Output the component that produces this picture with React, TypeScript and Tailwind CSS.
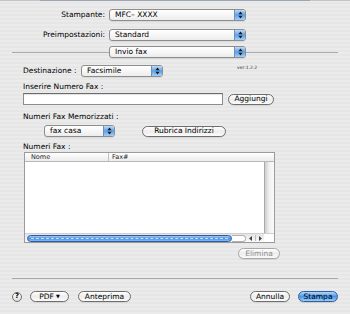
import React from "react";

function Arrows() {
  return (
    <svg width="5" height="8" viewBox="0 0 5 8" aria-hidden="true">
      <path d="M2.5 0.6L4.6 3.2H0.4Z M2.5 7.4L0.4 4.8H4.6Z" fill="#1a1a1a" />
    </svg>
  );
}

function Popup({ label, className = "" }: { label: string; className?: string }) {
  return (
    <div
      className={`flex h-[12px] items-stretch rounded-[3px] border border-[#8d8d8d] bg-gradient-to-b from-white via-[#f7f7f7] to-[#ececec] shadow-[0_1px_0_rgba(0,0,0,0.07)] ${className}`}
    >
      <span className="flex-1 truncate pl-[5px] leading-[10px] text-black">{label}</span>
      <span className="flex w-[11px] items-center justify-center rounded-r-[2px] border-l border-[#6d8fbf] bg-gradient-to-b from-[#bcdaf8] via-[#5f9fe6] to-[#9fd0fa]">
        <Arrows />
      </span>
    </div>
  );
}

function AquaButton({
  children,
  className = "",
  disabled = false,
}: {
  children: React.ReactNode;
  className?: string;
  disabled?: boolean;
}) {
  return (
    <div
      className={`flex h-[11px] items-center justify-center rounded-full border bg-gradient-to-b from-white via-[#ededed] to-[#fbfbfb] leading-none shadow-[0_1px_0_rgba(0,0,0,0.08)] ${
        disabled ? "border-[#a8a8a8] text-[#8e8e8e]" : "border-[#6e6e6e] text-black"
      } ${className}`}
    >
      {children}
    </div>
  );
}

export default function App() {
  return (
    <div className="h-[314px] w-[350px] overflow-hidden bg-[repeating-linear-gradient(0deg,#ebebeb_0px,#ebebeb_2px,#e6e6e6_2px,#e6e6e6_4px)] font-['DejaVu_Sans',sans-serif] text-[7.5px] text-black">
      {/* top edge */}
      <div className="flex h-px">
        <div className="w-[40px] bg-[#c4c4c4]" />
        <div className="w-[270px] bg-[#9aa5b6]" />
        <div className="flex-1 bg-[#c4c4c4]" />
      </div>

      {/* printer / presets */}
      <div className="mt-[8px] flex h-[12px] items-center">
        <span className="w-[105px] text-right">Stampante:</span>
        <Popup label="MFC– XXXX" className="ml-[4px] w-[137px]" />
      </div>
      <div className="mt-[8px] flex h-[12px] items-center">
        <span className="w-[105px] text-right">Preimpostazioni:</span>
        <Popup label="Standard" className="ml-[4px] w-[137px]" />
      </div>
      <div className="mt-[5px] flex h-[12px] items-center">
        <div className="ml-[12px] h-px w-[97px] bg-[#a9a9a9]" />
        <Popup label="Invio fax" className="w-[137px]" />
        <div className="h-px w-[92px] bg-[#a9a9a9]" />
      </div>

      {/* fax panel */}
      <div className="pl-[23px]">
        <div className="mt-[7px] flex h-[12px] items-center">
          <span className="w-[58px]">Destinazione :</span>
          <Popup label="Facsimile" className="w-[82px]" />
          <span className="ml-[74px] self-start text-[4.5px] leading-[6px] text-[#333]">ver:1.2.2</span>
        </div>

        <div className="mt-[5px] h-[10px] leading-[10px]">Inserire Numero Fax :</div>
        <div className="mt-px flex items-center">
          <div className="h-[12px] w-[200px] border border-[#8c8c8c] border-t-[#6a6a6a] bg-white shadow-[inset_0_1px_1px_rgba(0,0,0,0.12)]" />
          <AquaButton className="ml-[5px] w-[46px]">Aggiungi</AquaButton>
        </div>

        <div className="mt-[7px] h-[10px] leading-[10px]">Numeri Fax Memorizzati :</div>
        <div className="mt-[3px] flex items-center">
          <Popup label="fax casa" className="ml-[21px] w-[71px]" />
          <AquaButton className="ml-[27px] w-[84px]">Rubrica Indirizzi</AquaButton>
        </div>

        <div className="mt-[5px] h-[10px] leading-[10px]">Numeri Fax :</div>
        <div className="ml-px flex h-[91px] w-[251px] flex-col border border-[#9b9b9b] bg-white">
          <div className="flex h-[9px] border-b border-[#b8b8b8] bg-gradient-to-b from-white to-[#ececec] text-[6.5px] leading-[9px] text-[#222]">
            <span className="w-[84px] border-r border-[#c2c2c2] pl-[6px]">Nome</span>
            <span className="pl-[3px]">Fax#</span>
          </div>
          <div className="flex flex-1">
            <div className="flex-1" />
            <div className="w-[10px] border-l border-[#a9a9a9] bg-gradient-to-r from-[#cfcfcf] via-[#f2f2f2] to-[#fafafa]" />
          </div>
          <div className="flex h-[9px] items-center border-t border-[#d0d0d0] bg-gradient-to-b from-[#e4e4e4] to-[#fafafa]">
            <div className="ml-[2px] flex h-[7px] w-[205px] items-center rounded-full border border-[#34589a] bg-gradient-to-b from-[#a5cdf6] via-[#4a8ee2] to-[#86bdf3] px-[3px]">
              <div className="h-0 w-full border-t border-dashed border-[#c4e2fc]" />
            </div>
            <div className="h-[7px] w-[14px] rounded-r-full border border-l-0 border-[#b0b0b0] bg-white" />
            <div className="flex w-[18px] items-center justify-center gap-[3px]">
              <svg width="3" height="5" viewBox="0 0 3 5" aria-hidden="true">
                <path d="M0 2.5L3 0V5Z" fill="#444" />
              </svg>
              <div className="h-[6px] w-px bg-[#bdbdbd]" />
              <svg width="3" height="5" viewBox="0 0 3 5" aria-hidden="true">
                <path d="M3 2.5L0 0V5Z" fill="#444" />
              </svg>
            </div>
            <div className="h-full flex-1 bg-white" />
          </div>
        </div>

        <div className="mt-[5px] flex">
          <AquaButton disabled className="ml-[215px] w-[42px]">
            Elimina
          </AquaButton>
        </div>
      </div>

      {/* footer */}
      <div className="mx-[12px] mt-[19px] h-px bg-[#a9a9a9]" />
      <div className="mt-[12px] flex h-[11px] items-center pl-[12px]">
        <div className="flex h-[10px] w-[10px] items-center justify-center rounded-full border border-[#6e6e6e] bg-gradient-to-b from-white to-[#dedede] text-[7px] font-bold leading-none">
          ?
        </div>
        <AquaButton className="ml-[8px] w-[39px]">
          PDF <span className="ml-[2px] text-[5px]">▼</span>
        </AquaButton>
        <AquaButton className="ml-[9px] w-[53px]">Anteprima</AquaButton>
        <AquaButton className="ml-[119px] w-[40px]">Annulla</AquaButton>
        <div className="ml-[8px] flex h-[11px] w-[40px] items-center justify-center rounded-full border border-[#2f5f9e] bg-gradient-to-b from-[#b6d9fb] via-[#4b93e6] to-[#97cefb] leading-none text-black shadow-[0_1px_0_rgba(0,0,0,0.1)]">
          Stampa
        </div>
      </div>
    </div>
  );
}
